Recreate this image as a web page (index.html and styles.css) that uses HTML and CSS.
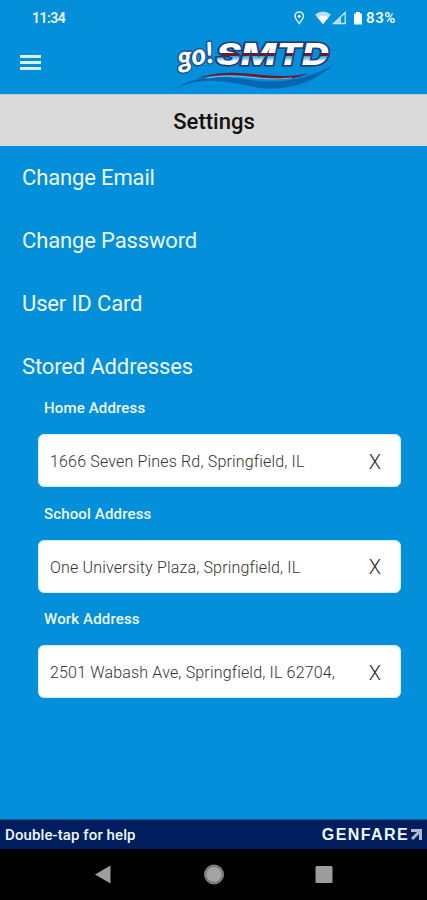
FILE: index.html
```html
<!DOCTYPE html>
<html lang="en">
<head>
    <meta charset="UTF-8">
    <meta name="viewport" content="width=device-width, initial-scale=1.0">
    <title>go!SMTD - Settings</title>
    <link rel="stylesheet" href="styles.css">
</head>
<body>
    <div class="screen">
        <div class="status-bar">
            <span class="time">11:34</span>
            <svg class="status-icons" width="72" height="18" viewBox="0 0 72 18">
                <path d="M7.2 14.6C4.7 11.5 3 9.3 3 7.1a4.2 4.2 0 0 1 8.4 0c0 2.200-1.700 4.400-4.200 7.500z" fill="none" stroke="#d5effe" stroke-width="1.5"/>
                <circle cx="7.2" cy="7.2" r="1.5" fill="#e6f5ff"/>
                <path d="M23 5.5Q31 -.5 39 5.5L31 15z" fill="#b5e0fa"/>
                <path d="M25.3 8.3Q31 5 36.7 8.3L31 15z" fill="#fff"/>
                <path d="M53.2 3.5V14.5H41.5z" fill="none" stroke="#c9e9fc" stroke-width="1.3"/>
                <path d="M49 7.5V14.5H42z" fill="#b5e0fa"/>
                <path d="M62 4.5h2v-1.500h4v1.500h2v11h-8z" fill="#f4fbff"/>
            </svg>
            <span class="battery">83%</span>
        </div>

        <div class="header">
            <button class="menu-btn" aria-label="Menu">
                <span></span>
                <span></span>
                <span></span>
            </button>
            <svg class="logo" width="166" height="60" viewBox="0 -4 166 60">
                <defs>
                    <linearGradient id="band" gradientUnits="userSpaceOnUse" x1="0" y1="-22" x2="0" y2="0">
                        <stop offset="0" stop-color="#fff"/>
                        <stop offset=".44" stop-color="#fff"/>
                        <stop offset=".46" stop-color="#6d1c25"/>
                        <stop offset=".59" stop-color="#6d1c25"/>
                        <stop offset=".61" stop-color="#42a7df"/>
                        <stop offset=".76" stop-color="#a9dcf5"/>
                        <stop offset=".82" stop-color="#fff"/>
                        <stop offset="1" stop-color="#fff"/>
                    </linearGradient>
                </defs>
                <path d="M0 55C25 38 51 41 78 45C110 50 139 42 160 30C139 50 109 58 76 51C47 45 26 42 0 55z" fill="#0865b2"/>
                <path d="M24 43C62 32 84 42 112 41Q125 41 136 38Q119 46 99 44C75 41 57 37 24 43z" fill="#6b1c2c"/>
                <path d="M34 43C66 37 87 47 119 43" fill="none" stroke="#80bee5" stroke-width="1"/>
                <g transform="translate(6 33) rotate(-9)">
                    <text class="logo-go" textLength="36" lengthAdjust="spacingAndGlyphs">go!</text>
                </g>
                <g transform="translate(43 30)">
                    <text class="logo-smtd" textLength="113" lengthAdjust="spacingAndGlyphs" fill="url(#band)">SMTD</text>
                </g>
            </svg>
        </div>

        <h1 class="title">Settings</h1>

        <div class="settings">
            <a class="item">Change Email</a>
            <a class="item">Change Password</a>
            <a class="item">User ID Card</a>
            <a class="item">Stored Addresses</a>

            <div class="addresses">
                <div class="address">
                    <div class="label">Home Address</div>
                    <div class="field">
                        <span class="value">1666 Seven Pines Rd, Springfield, IL</span>
                        <span class="clear">X</span>
                    </div>
                </div>
                <div class="address">
                    <div class="label">School Address</div>
                    <div class="field">
                        <span class="value">One University Plaza, Springfield, IL</span>
                        <span class="clear">X</span>
                    </div>
                </div>
                <div class="address">
                    <div class="label">Work Address</div>
                    <div class="field">
                        <span class="value">2501 Wabash Ave, Springfield, IL 62704,</span>
                        <span class="clear">X</span>
                    </div>
                </div>
            </div>
        </div>

        <div class="footer">
            <span class="help">Double-tap for help</span>
            <span class="brand">GENFARE</span>
            <svg width="13" height="13" viewBox="0 0 13 13">
                <path d="M1 1H12V12H9V6L3 12L1 10L7 4H1z" fill="#aeb9cf"/>
            </svg>
        </div>

        <div class="nav-bar">
            <svg width="18" height="20" viewBox="0 0 18 20"><path d="M1 9.5L16.5 .5V18.5z" fill="#9d9d9d"/></svg>
            <svg width="22" height="22" viewBox="0 0 22 22">
                <circle cx="11" cy="10.5" r="9.5" fill="#777" stroke="#8d8d8d"/>
                <circle cx="11" cy="10.5" r="7.6" fill="#a3a3a3"/>
            </svg>
            <svg width="18" height="18" viewBox="0 0 18 18"><rect x=".5" y="0" width="17" height="17" rx="1.5" fill="#9d9d9d"/></svg>
        </div>
    </div>
</body>
</html>
```

FILE: styles.css
```css
* {
    margin: 0;
    padding: 0;
    box-sizing: border-box;
}

body {
    font-family: Roboto, "Liberation Sans", sans-serif;
    background: #038fd9;
    color: #eef8ff;
}

.screen {
    width: 427px;
    height: 900px;
    display: flex;
    flex-direction: column;
    overflow: hidden;
}

.status-bar {
    height: 34px;
    display: flex;
    align-items: center;
    padding: 1px 28px 0 32px;
    font-size: 14px;
    font-weight: 600;
}

.time {
    letter-spacing: -0.5px;
}

.status-icons {
    margin-left: auto;
    margin-right: 2px;
}

.battery {
    width: 33px;
    font-size: 15px;
    letter-spacing: 0.6px;
}

.header {
    height: 60px;
    display: flex;
    align-items: flex-start;
    padding-left: 20px;
}

.menu-btn {
    width: 22px;
    margin-top: 21px;
    background: none;
    border: none;
    display: flex;
    flex-direction: column;
    gap: 3px;
}

.menu-btn span {
    display: block;
    width: 21px;
    height: 3px;
    background: #d9f0fe;
}

.logo {
    margin-left: 131px;
    margin-top: -3px;
    overflow: visible;
}

.logo-go {
    font-family: Lato, sans-serif;
    font-size: 29px;
    font-weight: 900;
    font-style: italic;
    fill: #fff;
    stroke: #164a8c;
    stroke-width: 2.5px;
    paint-order: stroke;
}

.logo-smtd {
    font-family: Inter, sans-serif;
    font-size: 30px;
    font-weight: 800;
    font-style: italic;
    stroke: #263a70;
    stroke-width: 3px;
    paint-order: stroke;
}

.title {
    height: 52px;
    line-height: 53px;
    padding-left: 1px;
    background: #dadada;
    border-top: 1px solid #b5cfdf;
    color: #111;
    font-size: 22px;
    font-weight: 500;
    text-align: center;
}

.settings {
    flex: 1;
}

.item {
    display: block;
    height: 63px;
    padding-left: 22px;
    line-height: 64px;
    font-size: 22px;
    letter-spacing: -0.14px;
}

.item:last-of-type {
    height: 57px;
}

.addresses {
    padding: 0 26px 0 38px;
}

.address {
    height: 105.5px;
}

.label {
    height: 42px;
    padding: 7px 0 0 6px;
    line-height: 18px;
    font-size: 15px;
    font-weight: 500;
    letter-spacing: 0.15px;
}

.field {
    height: 53px;
    display: flex;
    align-items: center;
    justify-content: space-between;
    padding: 2px 19px 0 11px;
    background: #fff;
    border: 1px solid #d3edfb;
    border-radius: 6px;
    color: #333;
}

.value {
    font-size: 16px;
    font-weight: 300;
    letter-spacing: 0.17px;
    white-space: nowrap;
}

.clear {
    font-size: 20px;
    font-weight: 300;
}

.footer {
    height: 30px;
    display: flex;
    align-items: center;
    padding: 0 4px 0 5px;
    background: #001e5e;
    border-top: 1px solid #06539a;
    font-size: 15px;
}

.help {
    font-weight: 500;
    letter-spacing: 0.1px;
}

.brand {
    margin-left: auto;
    margin-right: 1px;
    font-family: "Liberation Sans", sans-serif;
    font-size: 16px;
    font-weight: bold;
    letter-spacing: 1.4px;
}

.nav-bar {
    height: 51px;
    display: flex;
    align-items: center;
    justify-content: space-between;
    padding: 0 94px;
    background: #000;
}
```
